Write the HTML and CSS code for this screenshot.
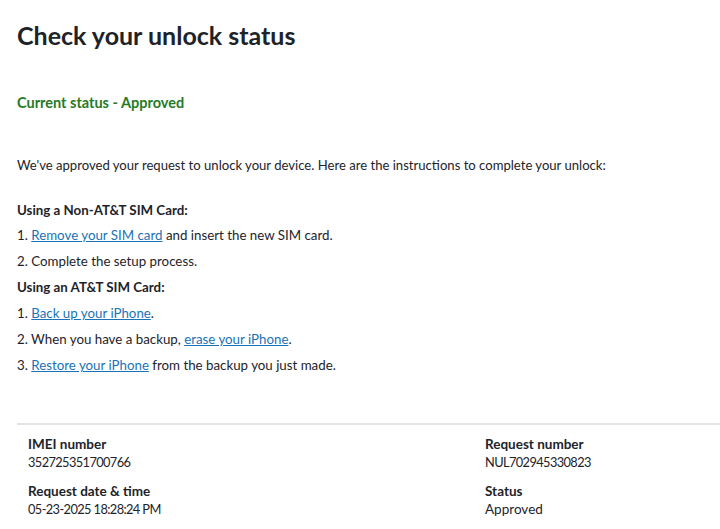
FILE: index.html
```html
<!DOCTYPE html>
<html lang="en">
<head>
  <meta charset="UTF-8">
  <meta name="viewport" content="width=device-width, initial-scale=1">
  <title>Check your unlock status</title>
  <link rel="stylesheet" href="styles.css">
</head>
<body>

  <main class="unlock">
    <h1 class="unlock-title">Check your unlock status</h1>

    <p class="unlock-status">Current status - Approved</p>

    <p class="unlock-intro">We've approved your request to unlock your device. Here are the instructions to complete your unlock:</p>

    <div class="steps">
      <p class="steps-heading">Using a Non-AT&amp;T SIM Card:</p>
      <p class="step">1. <a href="#">Remove your SIM card</a> and insert the new SIM card.</p>
      <p class="step">2. Complete the setup process.</p>
      <p class="steps-heading">Using an AT&amp;T SIM Card:</p>
      <p class="step">1. <a href="#">Back up your iPhone</a>.</p>
      <p class="step">2. When you have a backup, <a href="#">erase your iPhone</a>.</p>
      <p class="step">3. <a href="#">Restore your iPhone</a> from the backup you just made.</p>
    </div>

    <div class="details">
      <div class="detail">
        <div class="detail-label">IMEI number</div>
        <div class="detail-value detail-value--num">352725351700766</div>
      </div>
      <div class="detail">
        <div class="detail-label">Request number</div>
        <div class="detail-value detail-value--num">NUL702945330823</div>
      </div>
      <div class="detail">
        <div class="detail-label">Request date &amp; time</div>
        <div class="detail-value detail-value--num">05-23-2025 18:28:24 PM</div>
      </div>
      <div class="detail">
        <div class="detail-label">Status</div>
        <div class="detail-value">Approved</div>
      </div>
    </div>
  </main>

</body>
</html>
```

FILE: styles.css
```css
* {
  box-sizing: border-box;
}

body {
  font-family: Lato, "Open Sans", Arial, sans-serif;
  margin: 0;
  padding: 0;
  background: #fff;
  color: #1d2329;
}

.unlock {
  padding: 19px 0 0 17px;
}

.unlock-title {
  font-size: 25px;
  font-weight: 700;
  margin: 0;
  line-height: 32px;
}

.unlock-status {
  color: #267a26;
  font-size: 14.5px;
  font-weight: 700;
  margin: 42px 0 0;
  line-height: 20px;
}

.unlock-intro {
  font-size: 13.1px;
  margin: 42px 0 0;
  line-height: 20px;
}

.steps {
  margin-top: 25px;
  margin-bottom: 48px;
}

.steps-heading,
.step {
  font-size: 13.3px;
  margin: 0 0 6px;
  line-height: 20px;
}

.steps-heading {
  font-weight: 700;
}

.steps-heading:first-child + .step {
  margin-top: -1px;
}

.step a {
  color: #1a73b5;
}

.details {
  border-top: 2px solid #e4e4e4;
  display: grid;
  grid-template-columns: 457px 1fr;
  row-gap: 11px;
  padding: 10px 0 0 11px;
}

.detail-label {
  font-size: 13.5px;
  font-weight: 700;
  line-height: 18px;
}

.detail-value {
  font-size: 13.5px;
  line-height: 18px;
}

/* digits in the original face are narrow, squeeze them a bit */
.detail-value--num {
  font-size: 12.8px;
  letter-spacing: -0.6px;
}
```
